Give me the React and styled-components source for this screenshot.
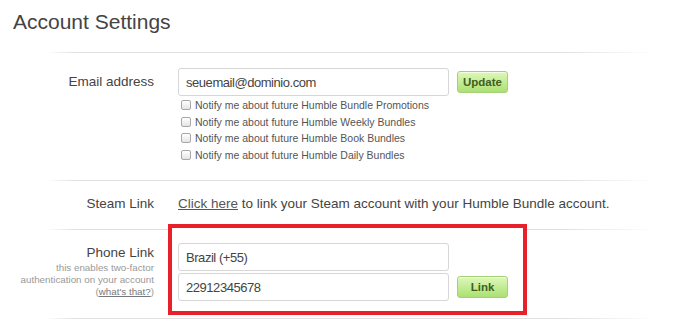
import React from "react";
import styled, { createGlobalStyle } from "styled-components";

const Global = createGlobalStyle`
  html, body { margin: 0; padding: 0; background: #fff; }
  body { font-family: "Liberation Sans", Arial, sans-serif; color: #444; }
`;

const Page = styled.div`
  width: 695px;
  height: 323px;
  overflow: hidden;
`;

const Title = styled.h1`
  margin: 0;
  padding: 8px 0 0 13px;
  font-size: 21px;
  line-height: 28px;
  font-weight: normal;
  color: #444;
`;

const Divider = styled.div`
  height: 1px;
  width: 610px;
  margin-left: 45px;
  margin-top: ${(p) => p.$top || 0}px;
  background: linear-gradient(to right, rgba(220,220,220,0) 0%, #e0e0e0 5%, #e0e0e0 85%, rgba(220,220,220,0) 100%);
`;

const Row = styled.div`
  display: grid;
  grid-template-columns: 154px 1fr;
  column-gap: 24px;
  padding: ${(p) => p.$pad};
`;

const Label = styled.div`
  text-align: right;
  font-size: 13.5px;
  line-height: ${(p) => p.$lh || 28}px;
  padding-top: ${(p) => p.$pt || 0}px;
  color: #444;
`;

const SubNote = styled.div`
  font-size: 9.8px;
  line-height: 12px;
  color: #999;
  text-align: right;
`;

const NoteLink = styled.a`
  color: #777;
  text-decoration: underline;
`;

const Fields = styled.div`
  display: flex;
  flex-direction: column;
`;

const InputLine = styled.div`
  display: flex;
  align-items: center;
  gap: 8px;
`;

const TextInput = styled.input`
  box-sizing: border-box;
  width: 271px;
  height: 28px;
  border: 1px solid #d6d6d6;
  border-radius: 3px;
  padding: 0 7px;
  font-family: "Liberation Sans", Arial, sans-serif;
  font-size: 13px;
  letter-spacing: -0.45px;
  color: #444;
  background: #fff;
  outline: none;
`;

const GreenButton = styled.button`
  box-sizing: border-box;
  width: 51px;
  height: 22px;
  padding: 0;
  border: 1px solid #a3d177;
  border-radius: 3px;
  background: linear-gradient(#def8b8, #abe073);
  box-shadow: inset 0 1px 0 rgba(255,255,255,0.6);
  font-family: "Liberation Sans", Arial, sans-serif;
  font-weight: bold;
  font-size: 11.5px;
  color: #3e5f1d;
  cursor: pointer;
`;

const CheckList = styled.div`
  margin-top: 1px;
  display: flex;
  flex-direction: column;
`;

const CheckRow = styled.label`
  display: flex;
  align-items: center;
  gap: 4px;
  height: 16.5px;
  font-size: 10.5px;
  color: #555;
`;

const Box = styled.span`
  box-sizing: border-box;
  width: 10px;
  height: 10px;
  margin-left: 3px;
  border: 1px solid #a8a8a8;
  border-radius: 2px;
  background: linear-gradient(#ffffff, #e4e4e4);
`;

const SteamText = styled.div`
  font-size: 13.5px;
  line-height: 20px;
  color: #444;
`;

const SteamLink = styled.a`
  color: #555;
  text-decoration: underline;
`;

const Highlight = styled.div`
  position: relative;
  z-index: 1;
  justify-self: start;
  margin: -6px 0 0 -10px;
  padding: 15px 15px 10px 6px;
  border: 4px solid #e8202a;
  background: #fff;
  display: flex;
  flex-direction: column;
  gap: 2px;
`;

const notifications = [
  "Notify me about future Humble Bundle Promotions",
  "Notify me about future Humble Weekly Bundles",
  "Notify me about future Humble Book Bundles",
  "Notify me about future Humble Daily Bundles",
];

export default function App() {
  return (
    <Page>
      <Global />
      <Title>Account Settings</Title>
      <Divider $top={16} />
      <Row $pad="15px 0 17px">
        <Label>Email address</Label>
        <Fields>
          <InputLine>
            <TextInput defaultValue="seuemail@dominio.com" readOnly />
            <GreenButton>Update</GreenButton>
          </InputLine>
          <CheckList>
            {notifications.map((n) => (
              <CheckRow key={n}>
                <Box />
                {n}
              </CheckRow>
            ))}
          </CheckList>
        </Fields>
      </Row>
      <Divider />
      <Row $pad="13px 0 15px">
        <Label $lh={20}>Steam Link</Label>
        <SteamText>
          <SteamLink href="#">Click here</SteamLink> to link your Steam account with your Humble Bundle account.
        </SteamText>
      </Row>
      <Divider />
      <Row $pad="0 0 3px">
        <div>
          <Label $lh={18} $pt={14}>Phone Link</Label>
          <SubNote>
            this enables two-factor
            <br />
            authentication on your account
            <br />
            (<NoteLink href="#">what's that?</NoteLink>)
          </SubNote>
        </div>
        <Highlight>
          <TextInput defaultValue="Brazil (+55)" readOnly />
          <InputLine>
            <TextInput defaultValue="22912345678" readOnly />
            <GreenButton>Link</GreenButton>
          </InputLine>
        </Highlight>
      </Row>
      <Divider />
    </Page>
  );
}
